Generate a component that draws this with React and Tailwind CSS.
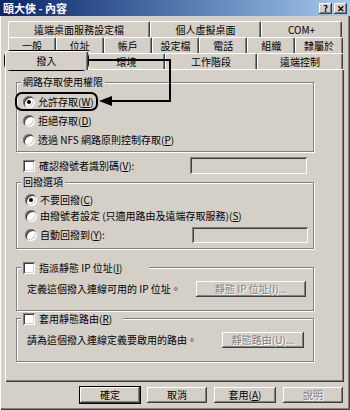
import React from 'react';

const raised =
  'bg-[#d4d0c8] shadow-[inset_-1px_-1px_#404040,inset_1px_1px_#ffffff,inset_-2px_-2px_#808080]';
const sunken =
  'shadow-[inset_1px_1px_#808080,inset_-1px_-1px_#ffffff,inset_2px_2px_#404040,inset_-2px_-2px_#d4d0c8]';
const etched = 'border border-[#808080] shadow-[inset_1px_1px_#ffffff,1px_1px_#ffffff]';
const dim = 'text-[#808080] [text-shadow:1px_1px_#ffffff]';

const Key = ({ k }) => (
  <span>
    (<span className="underline">{k}</span>)
  </span>
);

const Radio = ({ checked }) => (
  <span className={`w-[12px] h-[12px] shrink-0 rounded-full bg-white flex items-center justify-center ${sunken}`}>
    {checked && <span className="w-[4px] h-[4px] rounded-full bg-black" />}
  </span>
);

const Check = () => <span className={`w-[12px] h-[12px] shrink-0 bg-white ${sunken}`} />;

const Tab = ({ label, className = '' }) => (
  <div
    className={`h-full flex items-center justify-center rounded-t-[2px] border-t border-l border-white border-r border-r-[#404040] shadow-[inset_-1px_0_#808080] bg-[#d4d0c8] ${className}`}
  >
    {label}
  </div>
);

const Button = ({ children, className = '', isDefault = false }) => (
  <div
    className={`h-[16px] flex items-center justify-center ${raised} ${
      isDefault ? 'outline outline-1 outline-black' : ''
    } ${className}`}
  >
    {children}
  </div>
);

const Annotations = () => (
  <svg className="absolute inset-0 pointer-events-none" width="350" height="410">
    <rect x="5" y="51" width="83" height="19" rx="6" fill="none" stroke="#000" strokeWidth="2" />
    <path d="M88 60 H170 V101 H110" fill="none" stroke="#000" strokeWidth="2" />
    <polygon points="99,101 112,96 112,106" fill="#000" />
    <rect x="16" y="93" width="81" height="17" rx="6" fill="none" stroke="#000" strokeWidth="2" />
  </svg>
);

export default function App() {
  return (
    <div
      className={`relative w-[350px] h-[410px] overflow-hidden bg-[#d4d0c8] text-black text-[10px] leading-[12px] font-['Noto_Sans_CJK_TC',sans-serif] shadow-[inset_1px_0_#ffffff,inset_-1px_-1px_#404040,inset_-2px_-2px_#808080]`}
    >
      {/* title bar */}
      <div className="h-[16px] flex items-center pl-[3px] pr-[3px] bg-gradient-to-r from-[#0a246a] to-[#a6caf0]">
        <span className="text-white font-bold text-[11px] leading-[12px]">頤大俠 - 內容</span>
        <div className="ml-auto flex gap-[2px]">
          <div className={`w-[13px] h-[11px] flex items-center justify-center text-[9px] font-bold leading-none ${raised}`}>?</div>
          <div className={`w-[13px] h-[11px] flex items-center justify-center text-[9px] font-bold leading-none ${raised}`}>✕</div>
        </div>
      </div>

      {/* tabs */}
      <div className="mt-[5px]">
        <div className="flex h-[16px] ml-[8px] w-[334px]">
          <Tab label="遠端桌面服務設定檔" className="w-[142px]" />
          <Tab label="個人虛擬桌面" className="w-[111px]" />
          <Tab label="COM+" className="w-[81px]" />
        </div>
        <div className="flex h-[16px] ml-[8px] w-[335px]">
          {['一般', '位址', '帳戶', '設定檔', '電話', '組織', '隸屬於'].map((t) => (
            <Tab key={t} label={t} className="flex-1" />
          ))}
        </div>
        <div className="flex items-end h-[16px] ml-[5px] w-[338px]">
          <Tab label="撥入" className="relative z-10 w-[83px] !h-[19px] mb-[-1px]" />
          <Tab label="環境" className="w-[77px]" />
          <Tab label="工作階段" className="w-[92px]" />
          <Tab label="遠端控制" className="w-[86px]" />
        </div>
      </div>

      {/* panel */}
      <div className="ml-[5px] w-[339px] h-[313px] shadow-[inset_1px_1px_#ffffff,inset_-1px_-1px_#404040,inset_-2px_-2px_#808080] pt-[7px] pl-[11px]">
        <fieldset className={`w-[298px] pl-[4px] pt-[4px] pb-[2px] ${etched}`}>
          <legend className="px-[2px] bg-[#d4d0c8]">網路存取使用權限</legend>
          <div className="flex items-center gap-[3px] h-[19px] ml-[2px]">
            <Radio checked />
            <span>允許存取<Key k="W" /></span>
          </div>
          <div className="flex items-center gap-[3px] h-[19px] ml-[2px]">
            <Radio />
            <span>拒絕存取<Key k="D" /></span>
          </div>
          <div className="flex items-center gap-[3px] h-[19px] ml-[2px]">
            <Radio />
            <span>透過 NFS 網路原則控制存取<Key k="P" /></span>
          </div>
        </fieldset>

        <div className="flex items-center h-[17px] mt-[5px] pl-[7px]">
          <Check />
          <span className="ml-[4px]">確認撥號者識別碼<Key k="V" />:</span>
          <div className={`ml-auto mr-[37px] w-[117px] h-[17px] ${sunken}`} />
        </div>

        <fieldset className={`mt-[2px] w-[298px] pl-[4px] pt-[4px] pb-[4px] ${etched}`}>
          <legend className="px-[2px] bg-[#d4d0c8]">回撥選項</legend>
          <div className="flex items-center gap-[3px] h-[16px] ml-[4px]">
            <Radio checked />
            <span>不要回撥<Key k="C" /></span>
          </div>
          <div className="flex items-center gap-[3px] h-[16px] ml-[4px]">
            <Radio />
            <span>由撥號者設定 (只適用路由及遠端存取服務)<Key k="S" /></span>
          </div>
          <div className="flex items-center gap-[3px] h-[18px] mt-[2px] ml-[4px]">
            <Radio />
            <span>自動回撥到<Key k="Y" />:</span>
            <div className={`ml-auto mr-[5px] w-[116px] h-[16px] ${sunken}`} />
          </div>
        </fieldset>

        <fieldset className={`mt-[12px] w-[298px] pl-[4px] pt-[7px] pb-[13px] ${etched}`}>
          <legend className="w-[128px] flex items-center h-[13px] px-[2px] bg-[#d4d0c8]">
            <Check />
            <span className="ml-[4px]">指派靜態 IP 位址<Key k="I" /></span>
          </legend>
          <div className="flex items-center h-[16px] pl-[6px]">
            <span>定義這個撥入連線可用的 IP 位址。</span>
            <Button className={`ml-auto mr-[7px] w-[110px] ${dim}`}>
              靜態 IP 位址(I)...
            </Button>
          </div>
        </fieldset>

        <fieldset className={`mt-[1px] w-[298px] pl-[4px] pt-[7px] pb-[13px] ${etched}`}>
          <legend className="w-[102px] flex items-center h-[13px] px-[2px] bg-[#d4d0c8]">
            <Check />
            <span className="ml-[4px]">套用靜態路由<Key k="R" /></span>
          </legend>
          <div className="flex items-center h-[16px] pl-[6px]">
            <span>請為這個撥入連線定義要啟用的路由。</span>
            <Button className={`ml-auto mr-[9px] w-[82px] ${dim}`}>靜態路由(U)...</Button>
          </div>
        </fieldset>
      </div>

      {/* dialog buttons */}
      <div className="flex justify-end gap-[7px] mt-[5px] pr-[7px]">
        <Button isDefault className="w-[60px] outline-offset-0">確定</Button>
        <Button className="w-[60px]">取消</Button>
        <Button className="w-[62px]">
          <span>套用<Key k="A" /></span>
        </Button>
        <Button className={`w-[60px] ${dim}`}>說明</Button>
      </div>

      <Annotations />
    </div>
  );
}
